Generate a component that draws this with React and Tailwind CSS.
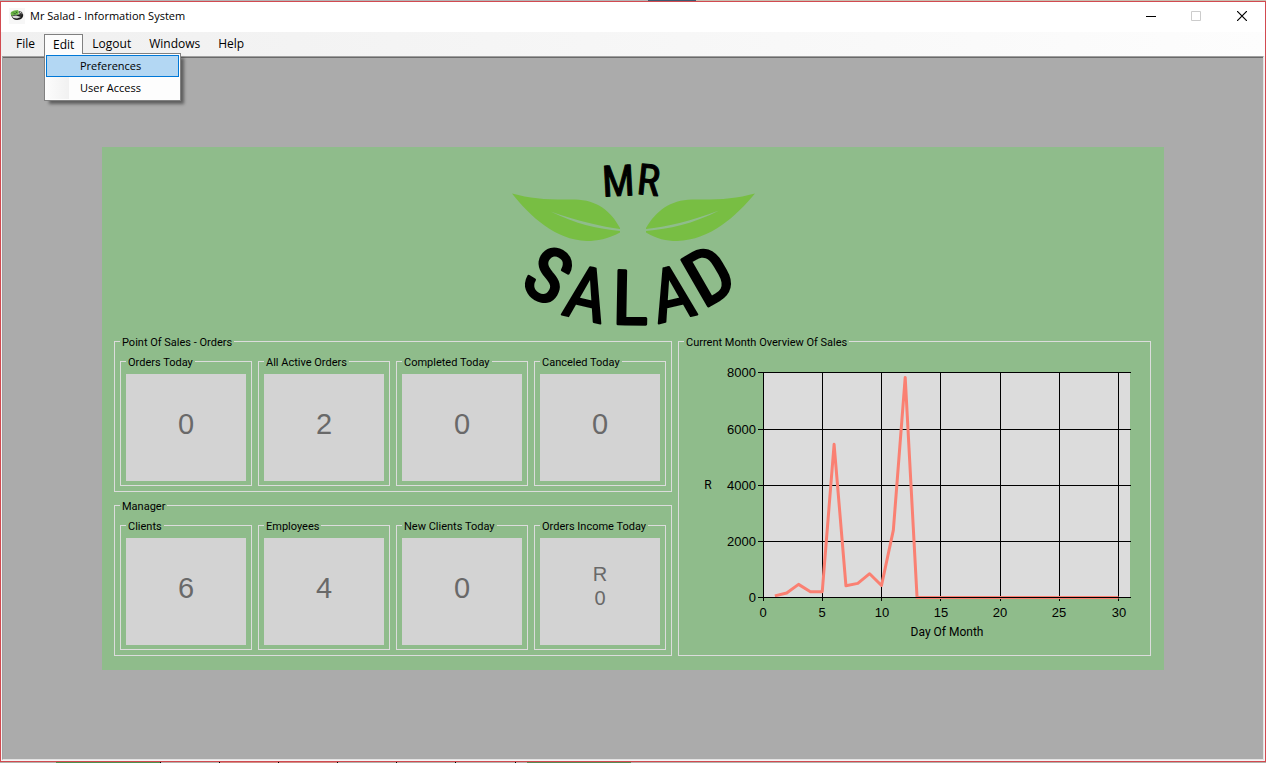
import React from "react";

const DAYS = [
  [1, 60], [2, 165], [3, 470], [4, 210], [5, 210], [6, 5450], [7, 420],
  [8, 505], [9, 850], [10, 430], [11, 2400], [12, 7830], [13, 0], [30, 0],
];
const X_TICKS = [0, 5, 10, 15, 20, 25, 30];
const Y_TICKS = [0, 2000, 4000, 6000, 8000];
const xAt = (day) => 79 + day * 11.85;
const yAt = (value) => 249.4 - (value / 8000) * 225;

function SalesChart() {
  const points = DAYS.map(([d, v]) => `${xAt(d)},${yAt(v) + 0.2}`).join(" ");
  return (
    <svg
      viewBox="0 0 461 302"
      className="block h-auto w-full font-[Roboto,'Liberation_Sans',sans-serif]"
      role="img"
      aria-label="Current Month Overview Of Sales"
    >
      <rect x="79" y="24" width="367" height="225" fill="#dcdcdc" />
      <g stroke="#000" strokeWidth="1">
        {X_TICKS.map((d) => (
          <line key={d} x1={Math.floor(xAt(d)) + 0.5} x2={Math.floor(xAt(d)) + 0.5} y1="24" y2="253" />
        ))}
        {Y_TICKS.map((v) => (
          <line key={v} x1="74" x2="447" y1={Math.round(yAt(v)) + 0.5} y2={Math.round(yAt(v)) + 0.5} />
        ))}
      </g>
      <polyline points={points} fill="none" stroke="#fa8072" strokeWidth="3" strokeLinejoin="round" />
      <line x1="79" x2="447" y1="249.5" y2="249.5" stroke="#000" strokeWidth="1" />
      <g className="font-['Liberation_Sans',Arial,sans-serif]" fontSize="13" textAnchor="end">
        {Y_TICKS.map((v) => (
          <text key={v} x="72" y={Math.round(yAt(v)) + 5}>{v}</text>
        ))}
      </g>
      <g className="font-['Liberation_Sans',Arial,sans-serif]" fontSize="13" textAnchor="middle">
        {X_TICKS.map((d) => (
          <text key={d} x={Math.round(xAt(d))} y="269">{d}</text>
        ))}
      </g>
      <text x="24" y="141" fontSize="12" textAnchor="middle">R</text>
      <text x="263" y="288" fontSize="12" textAnchor="middle">Day Of Month</text>
    </svg>
  );
}

function Logo() {
  return (
    <svg viewBox="-2 0 268 185" className="mx-auto block h-[185px] w-[268px] overflow-visible" role="img" aria-label="Mr Salad">
      <g fill="#78be43">
        <path d="M11 43.500 C31 49 49 50 74 49.500 C96 50 110 61 119 78 V79 C102 77 77 71 49.500 61.500 C75 74 97 79 119 81 V82.500 C107 89 96 91 86 91 C54 90 29 66 11 43.500 Z" />
        <path d="M254 43.500 C234 49 216 50 191 49.500 C169 50 155 61 145 78 V79 C165 77 190 71 218 60.500 C192 74 168 79 145 81 V82.500 C156 89 165 91 176 91 C210 90 235 66 254 43.500 Z" />
      </g>
      <g
        className="font-['Liberation_Sans_Narrow','Roboto_Condensed','Open_Sans_Condensed','DejaVu_Sans_Condensed',sans-serif]"
        fontWeight="400"
        textAnchor="middle"
        fill="#000"
        stroke="#000"
        strokeWidth="3"
        strokeLinejoin="round"
      >
        <text fontSize="43" strokeWidth="1" transform="translate(118 46) rotate(-3)">M</text>
        <text fontSize="43" strokeWidth="1" transform="translate(146 45) rotate(6)">R</text>
        <text fontSize="75" transform="translate(34 148) rotate(30)">S</text>
        <text fontSize="74" strokeWidth="2" transform="translate(80 169) rotate(13)">A</text>
        <text fontSize="75" transform="translate(129 174) rotate(1)">L</text>
        <text fontSize="74" strokeWidth="2" transform="translate(177 169) rotate(-13)">A</text>
        <text fontSize="75" transform="translate(221 148) rotate(-30)">D</text>
      </g>
    </svg>
  );
}

function Group({ title, className = "", children }) {
  return (
    <fieldset className={`min-w-0 border border-[#dcdcdc] px-[5px] ${className}`}>
      <legend className="px-0.5 pt-0.5 font-[Roboto,'Liberation_Sans',sans-serif] text-[11px] leading-[11px] whitespace-nowrap">
        {title}
      </legend>
      {children}
    </fieldset>
  );
}

function Tile({ title, lines }) {
  return (
    <Group title={title} className="pt-[6px] pb-1">
      <div
        className={`flex h-[107px] flex-col items-center justify-center bg-[#d3d3d3] text-[#696969] ${
          lines.length > 1 ? "pb-3 text-[20px] leading-6" : "pb-2 text-[29px] leading-8"
        }`}
      >
        {lines.map((line) => (
          <span key={line}>{line}</span>
        ))}
      </div>
    </Group>
  );
}

function AppIcon() {
  return (
    <svg viewBox="0 0 16 16" className="h-4 w-4" aria-hidden="true">
      <rect width="16" height="16" fill="#f7f7f7" />
      <path d="M2 7 L14 6 C15 9 12 12 8 12 C5 12 3 10 2 7Z" fill="#1b1b1b" />
      <path d="M10 3 L13 4 L14 7 L11 8Z" fill="#333" />
      <path d="M11 4.500 L12.500 5" stroke="#ddd" strokeWidth="1" />
      <path d="M1.500 6 L2 4 L5 2.500 L9 2 L10 4 L9 7 L6 6.500 L3 8Z" fill="#6bb447" />
      <path d="M3 8 L7 7.500 L12 9 L8 10.500 L4.500 10Z" fill="#d8d8d8" />
      <path d="M4 4.500 L5 5.500 M7 3.500 L8 5 M6 5 L6 6.500" stroke="#215b1c" strokeWidth="1" />
    </svg>
  );
}

const MENUS = ["File", "Edit", "Logout", "Windows", "Help"];

function MenuBar() {
  return (
    <nav className="flex h-6 items-stretch bg-linear-to-r from-[#f0f0f0] to-[#fdfdfd] pt-0.5 pl-[6px]">
      {MENUS.map((name) =>
        name === "Edit" ? (
          <div key={name} className="relative">
            <button className="relative z-20 h-5 border border-b-0 border-[#808080] bg-[#fcfcfc] px-2 leading-4">
              {name}
            </button>
            <ul className="absolute top-[19px] left-0 z-10 w-[137px] border border-[#808080] bg-[#fdfdfd] p-px text-[11px] shadow-[4px_4px_3px_-1px_rgba(0,0,0,0.45)]">
              <li>
                <button className="block h-[22px] w-full border border-[#0078d7] bg-[#b3d7f3] pl-[33px] text-left leading-5">
                  Preferences
                </button>
              </li>
              <li className="bg-linear-to-r from-[#fcfcfc] to-[#f1f1f1] bg-[length:23px_100%] bg-no-repeat">
                <button className="block h-[22px] w-full pl-[34px] text-left leading-[22px]">User Access</button>
              </li>
            </ul>
          </div>
        ) : (
          <button key={name} className="h-5 px-[9px] leading-[18px]">
            {name}
          </button>
        )
      )}
    </nav>
  );
}

function TitleBar() {
  return (
    <header className="flex h-[30px] items-center bg-white pb-0.5 pl-2">
      <AppIcon />
      <h1 className="ml-[5px] flex-1 text-[11px]">Mr Salad - Information System</h1>
      <button aria-label="Minimize" className="flex h-full w-[46px] items-center justify-center">
        <svg viewBox="0 0 10 10" className="h-[10px] w-[10px]"><path d="M0 5.500H10" stroke="#000" /></svg>
      </button>
      <button aria-label="Maximize" disabled className="flex h-full w-[44px] items-center justify-center">
        <svg viewBox="0 0 10 10" className="h-[10px] w-[10px]"><path d="M.5.5H9.500V9.500H.5Z" fill="none" stroke="#ccc" /></svg>
      </button>
      <button aria-label="Close" className="flex h-full w-[47px] items-center justify-center">
        <svg viewBox="0 0 10 10" className="h-[10px] w-[10px]"><path d="M0 0L10 10M10 0L0 10" stroke="#000" strokeWidth="1.200" /></svg>
      </button>
    </header>
  );
}

export default function App() {
  return (
    <div className="flex min-h-screen flex-col font-['Liberation_Sans',Arial,sans-serif] text-black">
      <div className="flex h-px bg-[#b5b5b5]">
        <div className="w-1/2" />
        <div className="ml-[15px] w-12 bg-[#3f5a70]" />
        <div className="flex-1 bg-[#c8bfb0]" />
      </div>
      <div className="flex flex-1 flex-col border border-[#d24a50]">
        <div className="font-['Open_Sans','Noto_Sans',sans-serif] text-[12px]">
          <TitleBar />
          <MenuBar />
        </div>
        <div className="flex flex-1 flex-col border-r border-b border-l border-[#f4f4f4]">
          <div className="flex flex-1 flex-col border border-t-[#a0a0a0] border-r-[#e3e3e3] border-b-[#e3e3e3] border-l-[#a0a0a0]">
            <main className="flex flex-1 items-center justify-center border-t border-[#696969] bg-[#ababab]">
              <section className="w-full max-w-[1062px] bg-[#8fbc8b] pt-[3px] pr-[13px] pb-[14px] pl-3">
                <Logo />
                <div className="grid grid-cols-[558fr_473fr] gap-[6px]">
                  <div className="flex flex-col gap-[7px]">
                    <Group title="Point Of Sales - Orders" className="pt-[7px] pb-[5px]">
                      <div className="grid grid-cols-4 gap-[6px]">
                        <Tile title="Orders Today" lines={["0"]} />
                        <Tile title="All Active Orders" lines={["2"]} />
                        <Tile title="Completed Today" lines={["0"]} />
                        <Tile title="Canceled Today" lines={["0"]} />
                      </div>
                    </Group>
                    <Group title="Manager" className="pt-[7px] pb-[5px]">
                      <div className="grid grid-cols-4 gap-[6px]">
                        <Tile title="Clients" lines={["6"]} />
                        <Tile title="Employees" lines={["4"]} />
                        <Tile title="New Clients Today" lines={["0"]} />
                        <Tile title="Orders Income Today" lines={["R", "0"]} />
                      </div>
                    </Group>
                  </div>
                  <Group title="Current Month Overview Of Sales">
                    <SalesChart />
                  </Group>
                </div>
              </section>
            </main>
          </div>
        </div>
      </div>
      <div className="flex h-px bg-[#b5b0ab]">
        <div className="w-14" />
        <div className="w-26 bg-[#4f9150]" />
        <div className="w-[60px] border-x border-black" />
        <div className="w-[59px] border-r border-black bg-[#cf8f88]" />
        <div className="w-[59px] border-r border-black bg-[#cf8f88]" />
        <div className="w-[59px] border-r border-black" />
        <div className="w-[59px] border-r border-black" />
        <div className="w-[60px] border-r border-black" />
        <div className="ml-[11px] w-26 bg-[#5a8a55]" />
      </div>
    </div>
  );
}
